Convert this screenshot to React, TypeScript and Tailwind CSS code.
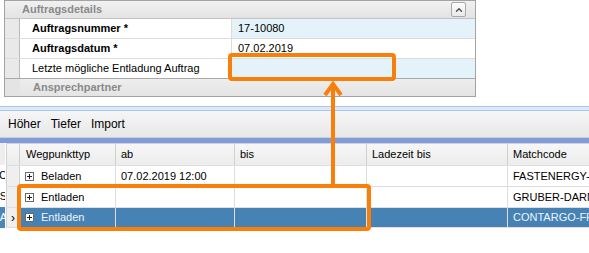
import { ChevronUp } from "lucide-react";

const font = { fontFamily: '"Liberation Sans", Arial, sans-serif' };

function PlusBox() {
  return (
    <span className="relative inline-block w-[9px] h-[9px] border border-[#6b6b6b] bg-white shrink-0">
      <span className="absolute left-[1px] top-[3px] w-[5px] h-[1px] bg-[#222]" />
      <span className="absolute left-[3px] top-[1px] w-[1px] h-[5px] bg-[#222]" />
    </span>
  );
}

const rows = [
  { typ: "Beladen", ab: "07.02.2019 12:00", match: "FASTENERGY-RHEIN", edge: "C", selected: false },
  { typ: "Entladen", ab: "", match: "GRUBER-DARMSTADT", edge: "S", selected: false },
  { typ: "Entladen", ab: "", match: "CONTARGO-FRANKFURT", edge: "A", selected: true },
];

export default function App() {
  return (
    <div className="relative w-[589px] h-[253px] overflow-hidden bg-white text-[11px] text-black" style={font}>
      {/* Auftragsdetails panel */}
      <div className="ml-[4px] w-[472px] border border-[#a3a3a3] bg-white">
        <div className="flex h-[18px] items-center bg-gradient-to-b from-[#f1f1f1] to-[#e3e3e3] border-b border-[#c4c4c4]">
          <span className="ml-[17px] font-bold text-[#8a8a8a]">Auftragsdetails</span>
          <span className="ml-auto mr-[9px] flex h-[15px] w-[15px] items-center justify-center rounded-[2px] border border-[#a9a9a9] bg-gradient-to-b from-[#fdfdfd] to-[#e9e9e9]">
            <ChevronUp size={10} strokeWidth={3.5} className="text-[#555]" />
          </span>
        </div>
        {[
          { label: "Auftragsnummer *", value: "17-10080", bold: true, blue: true },
          { label: "Auftragsdatum *", value: "07.02.2019", bold: true, blue: false },
          { label: "Letzte mögliche Entladung Auftrag", value: "", bold: false, blue: true },
        ].map((r, i) => (
          <div key={i} className={`flex h-[20px] ${i < 2 ? "border-b border-[#dcdcdc]" : "border-b border-[#a9a9a9]"}`}>
            <div className="w-[15px] bg-[#e9e9e9] border-r border-[#b8b8b8]" />
            <div className={`w-[212px] flex items-center pl-[12px] border-r border-[#dcdcdc] ${r.bold ? "font-bold" : ""}`}>
              {r.label}
            </div>
            <div className={`flex-1 flex items-center pl-[6px] ${r.blue ? "bg-[#e4f3f9]" : "bg-white"}`}>{r.value}</div>
          </div>
        ))}
        <div className="flex h-[17px] bg-gradient-to-b from-[#eeeeee] to-[#e4e4e4]">
          <div className="w-[15px] bg-[#e4e4e4]" />
          <span className="flex items-center pl-[13px] font-bold text-[#8a8a8a]">Ansprechpartner</span>
        </div>
      </div>

      {/* lower section */}
      <div className="mt-[9px] h-[1px] bg-[#a8c6ee]" />
      <div className="h-[3px] bg-[#dde9f8]" />
      <div className="h-[1px] bg-[#a8c6ee]" />
      <div className="flex h-[27px] items-center gap-[10px] pl-[8px] text-[12px] bg-gradient-to-b from-[#f6f6f6] to-[#e8e8e8] border-b border-[#cfcfcf]">
        <span>Höher</span>
        <span>Tiefer</span>
        <span>Import</span>
      </div>
      <div className="h-[5px] bg-[#7f9bdc]" />

      <div className="flex">
        {/* clipped left panel */}
        <div className="w-[5px] flex flex-col">
          <div className="h-[22px] bg-[#eeeeee]" />
          {rows.map((r, i) => (
            <div
              key={i}
              className={`h-[21px] flex items-center justify-end overflow-hidden ${r.selected ? "bg-[#4b86b8] text-white" : "bg-white"}`}
            >
              <span className="shrink-0 -mr-[2px]">{r.edge}</span>
            </div>
          ))}
        </div>
        <div className="w-[2px] h-[110px] bg-[#7f9bdc]" />
        <div className="flex-1 ml-[1px]">
          {/* header */}
          <div className="flex h-[22px] border-t border-[#d4d4d4] bg-gradient-to-b from-[#f7f7f7] to-[#ececec]">
            <div className="w-[14px] border-r border-[#d0d0d0] border-l" />
            <div className="w-[96px] flex items-center pl-[6px] border-r border-[#d0d0d0]">Wegpunkttyp</div>
            <div className="w-[119px] flex items-center pl-[5px] border-r border-[#d0d0d0]">ab</div>
            <div className="w-[132px] flex items-center pl-[5px] border-r border-[#d0d0d0]">bis</div>
            <div className="w-[141px] flex items-center pl-[5px] border-r border-[#d0d0d0]">Ladezeit bis</div>
            <div className="flex-1 flex items-center pl-[5px] whitespace-nowrap">Matchcode</div>
          </div>
          {rows.map((r, i) => (
            <div
              key={i}
              className={`flex h-[21px] border-t border-[#dedede] ${r.selected ? "bg-[#4682b4] text-[#eef4fa] border-b" : "bg-white"}`}
            >
              <div className="w-[14px] flex items-center justify-center border-r border-[#d0d0d0] bg-[#efefef] text-black border-l">
                {r.selected ? <span className="text-[12px] leading-none">›</span> : null}
              </div>
              <div className="w-[96px] flex items-center gap-[7px] pl-[5px] border-r border-[#dedede]">
                <PlusBox />
                <span>{r.typ}</span>
              </div>
              <div className="w-[119px] flex items-center pl-[5px] border-r border-[#dedede]">{r.ab}</div>
              <div className="w-[132px] border-r border-[#dedede]" />
              <div className="w-[141px] border-r border-[#dedede]" />
              <div className="flex-1 flex items-center pl-[5px] whitespace-nowrap overflow-hidden">{r.match}</div>
            </div>
          ))}
        </div>
      </div>

      {/* annotations */}
      <div className="absolute left-[228px] top-[53px] w-[168px] h-[28px] border-[4px] border-[#f77f0a] rounded-[4px]" />
      <div className="absolute left-[17px] top-[184px] w-[354px] h-[47px] border-[4px] border-[#f77f0a] rounded-[4px]" />
      <svg className="absolute left-[320px] top-[81px]" width="26" height="106" viewBox="0 0 26 106">
        <line x1="13" y1="4" x2="13" y2="106" stroke="#f77f0a" strokeWidth="4" />
        <polyline points="5,14 13,3 21,14" fill="none" stroke="#f77f0a" strokeWidth="4" strokeLinejoin="miter" />
      </svg>
    </div>
  );
}
